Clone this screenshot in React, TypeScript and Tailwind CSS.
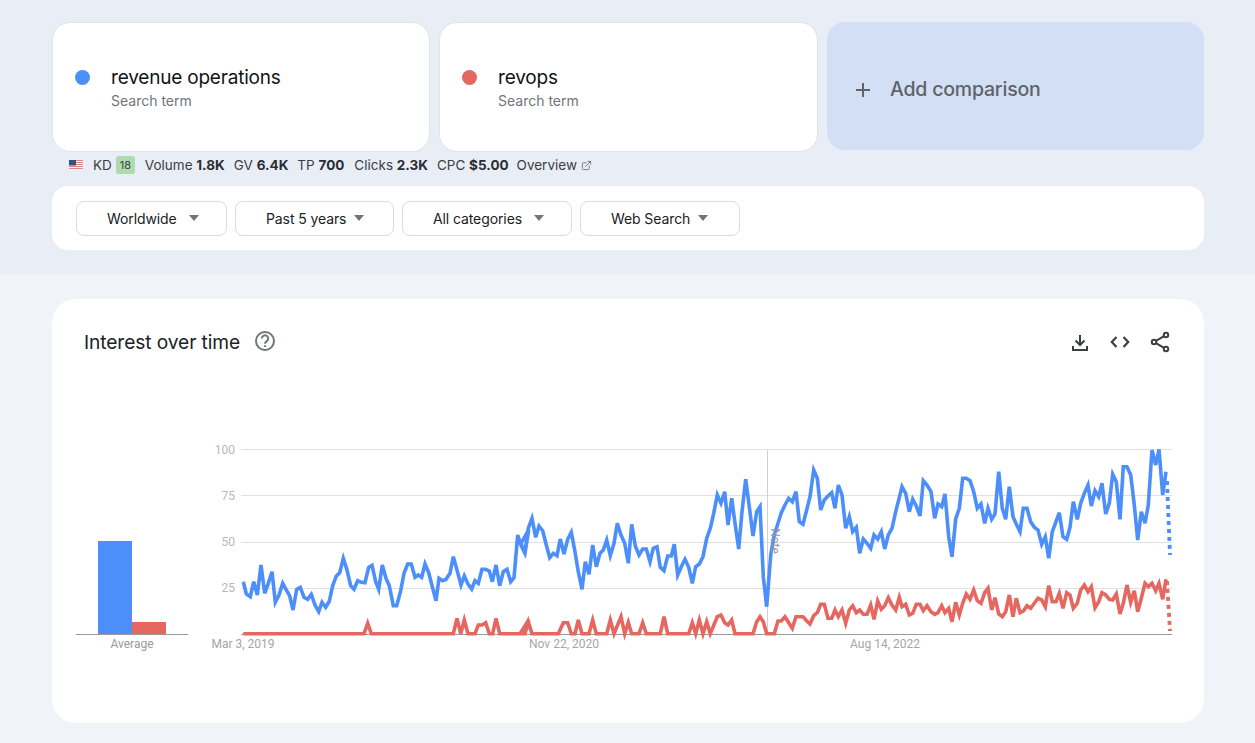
import React from "react";
import { MdAdd } from "react-icons/md";
import { FiExternalLink } from "react-icons/fi";

type P = [number, number];
const seg = (off: number, pts: number[]): P[] => {
  const out: P[] = [];
  for (let i = 0; i < pts.length; i += 2) out.push([off + pts[i] / 3, 440 + pts[i + 1] / 3]);
  return out;
};
const str = (p: P[]) => p.map(([x, y]) => `${x.toFixed(1)},${y.toFixed(1)}`).join(" ");

const blue = str([
  ...seg(200, [130,425,139,462,151,470,161,425,172,465,183,375,194,460,205,430,216,395,226,487,237,465,248,430,258,448,269,468,279,510,290,448,301,442,312,472,323,478,334,463,345,495,356,515,366,487,377,502,388,484,398,437,409,408,419,398,430,355,441,390,452,437,462,448,473,422,484,427,495,428,506,382,516,376,527,425,536,448,547,375,558,415,568,437,580,497,590,497,602,452,612,400,623,372,634,372,645,412,655,405,665,412,675,372,686,398,697,440,708,482,717,415,728,422,738,418,750,400,760,350,771,390,783,435,793,408,804,432,815,447,825,422,835,430,846,388,857,388,868,393,877,425,888,375,899,437,910,395,921,388,932,425,942,413,953,285,964,318,975,340,986,270]),
  ...seg(520, [3,310,14,340,25,265,36,235,47,292,57,258,68,272,79,315,89,353,100,340,111,347,121,297,132,342,143,298,154,277,165,335,175,395,186,448,196,365,207,403,218,315,229,380,240,340,250,330,260,300,271,347,282,310,292,250,303,285,314,310,325,370,335,253,346,318,357,345,368,327,379,327,390,365,400,325,411,320,421,382,432,392,443,348,454,348,463,313,473,405,484,380,495,358,506,382,517,430,527,380,538,372,549,350,560,295,571,265,581,220,592,165,603,190,614,155,624,255,635,175,645,250,656,327,666,215,677,118,688,200,699,288,710,215,720,200,730,410,740,500,752,345,763,285,774,250,784,218,795,195,806,175,817,185,828,155,838,245,849,253,860,210,870,170,881,90,892,115,902,210,913,180,924,168,935,158,945,205,955,135,966,165,977,265,988,230]),
  ...seg(850, [8,275,19,262,29,340,40,297,51,310,62,325,72,285,83,297,94,275,104,327,115,285,126,265,137,215,146,180,156,140,167,160,178,215,188,178,199,198,210,228,220,122,231,135,243,155,254,235,264,192,275,200,285,162,296,290,306,350,317,237,328,205,338,115,349,115,360,122,371,155,382,205,393,192,404,250,414,205,425,238,435,222,446,95,457,205,467,238,478,140,489,230,499,252,510,275,520,205,531,205,542,245,553,262,564,270,575,313,586,290,596,355,607,275,618,245,628,218,639,290,650,298,660,262,670,185,682,238,692,190,703,160,714,135,724,198,735,152,746,170,756,130,767,222,778,190,788,103,799,125,810,238,820,80,831,80,842,105,853,195,863,300,874,215,885,250,895,195,906,30,917,75,927,28,938,165,948,95]),
]);

const red = str([
  ...seg(200, [130,581,492,581,503,550,514,581,760,581,771,535,782,581,793,540,804,581,825,581,835,555,846,555,857,548,868,581,878,581,888,535,899,581,975,581,986,540]),
  ...seg(520, [0,581,14,581,25,545,36,581,115,581,130,548,143,548,154,581,165,581,175,540,186,581,207,581,218,540,229,581,260,581,271,540,282,581,303,530,314,581,325,547,335,581,357,581,368,548,379,581,421,581,432,530,443,581,506,581,517,548,527,581,538,540,549,581,560,545,571,581,592,530,603,525,614,548,624,555,635,540,645,581,699,581,710,545,720,530,730,545,740,581,763,581,774,543,784,543,795,530,806,548,817,565,828,530,849,530,860,543,870,552,881,527,892,518,902,493,913,493,924,535,935,535,945,510,955,530,966,510,977,550,988,510]),
  ...seg(850, [8,497,19,518,29,510,40,523,51,523,62,495,72,538,83,483,94,508,104,497,115,473,126,495,137,510,148,472,156,500,167,493,178,525,188,520,199,493,210,493,220,512,231,497,243,515,254,523,264,518,275,497,285,518,296,505,306,545,317,487,328,525,338,490,349,462,360,478,371,450,382,482,393,490,404,458,414,445,425,510,435,473,446,522,457,530,467,515,478,465,489,530,499,475,510,518,520,513,531,497,542,505,553,490,564,475,575,480,586,500,596,437,607,485,618,485,628,460,639,505,650,458,660,465,670,505,682,490,692,450,703,435,714,455,724,440,735,503,746,485,756,458,767,465,778,478,788,480,799,462,810,522,820,490,831,435,842,487,853,452,863,515,874,475,885,430,895,440,906,430,917,452,927,430,938,478,948,418]),
]);

const BLUE = "#4d8ffa";
const RED = "#e56760";

function Caret() {
  return <span className="h-0 w-0 border-x-[5.5px] border-t-[6px] border-x-transparent border-t-[#70757a]" />;
}

function TermCard({ color, name, w }: { color: string; name: string; w: string }) {
  return (
    <div className={`flex h-[130px] items-start rounded-[18px] border border-[#dfe3ea] bg-white pl-[22px] ${w}`}>
      <span className="mr-[21px] mt-[47px] h-[15px] w-[15px] rounded-full" style={{ backgroundColor: color }} />
      <div className="pt-[42px]">
        <div className="text-[19px] font-[420] leading-[26px] tracking-[-0.2px] text-[#111315]">{name}</div>
        <div className="text-[14px] leading-[20px] text-[#70757a]">Search term</div>
      </div>
    </div>
  );
}

function Filter({ label, w, gap }: { label: string; w: string; gap: string }) {
  return (
    <div className={`flex h-[35px] items-center rounded-[8px] border border-[#dadce0] bg-white pl-[30px] text-[14px] tracking-[-0.1px] text-[#202124] ${w} ${gap}`}>
      <span>{label}</span>
      <Caret />
    </div>
  );
}

function Metric({ k, v, className }: { k: string; v: string; className: string }) {
  return (
    <span className={className}>
      {k} <b className="font-bold text-[#2b2e33]">{v}</b>
    </span>
  );
}

function Flag() {
  return (
    <svg width="14" height="10" viewBox="0 0 14 10" className="mr-[10px]">
      <rect width="14" height="10" fill="#f3f3f6" />
      {[0, 2, 4, 6, 8].map((y) => (
        <rect key={y} y={y} width="14" height="1" fill="#d9868b" />
      ))}
      <rect width="7" height="5.5" fill="#3f4d85" />
    </svg>
  );
}

function HelpIcon() {
  return (
    <svg width="24" height="24" viewBox="0 0 24 24" fill="none" stroke="#70757a" strokeWidth="2" className="mb-[2px]">
      <circle cx="12" cy="12" r="9" />
      <path d="M8.8 9.6a3.2 3.2 0 1 1 5 2.6c-1 .7-1.8 1.3-1.8 2.6" />
      <path d="M12 16.2v1.9" />
    </svg>
  );
}

function DownloadIcon() {
  return (
    <svg width="24" height="24" viewBox="0 0 24 24" fill="none" stroke="#3c4043" strokeWidth="2">
      <path d="M12 5v10M7.5 10.5 12 15l4.5-4.5M5 16v4h14v-4" />
    </svg>
  );
}

function CodeIcon() {
  return (
    <svg width="24" height="24" viewBox="0 0 24 24" fill="none" stroke="#3c4043" strokeWidth="2.2">
      <path d="M8.5 7 3.8 12l4.7 5M15.5 7l4.7 5-4.7 5" />
    </svg>
  );
}

function ShareIcon() {
  return (
    <svg width="24" height="24" viewBox="0 0 24 24" fill="none" stroke="#3c4043" strokeWidth="2">
      <circle cx="18" cy="5" r="2.2" />
      <circle cx="6" cy="12" r="2.2" />
      <circle cx="18" cy="19" r="2.2" />
      <path d="M8 10.9 16 6.1M8 13.1l8 4.8" />
    </svg>
  );
}

export default function App() {
  return (
    <div className="min-h-[743px] w-[1255px] overflow-hidden bg-[#f0f4f9] font-['Inter','Noto_Sans',sans-serif]">
      <div className="h-[274px] bg-[#e8edf6] pl-[52px] pr-[51px] pt-[22px]">
        <div className="flex gap-[9px]">
          <TermCard color={BLUE} name="revenue operations" w="w-[378px]" />
          <TermCard color={RED} name="revops" w="w-[379px]" />
          <div className="flex h-[128px] w-[377px] items-center rounded-[18px] bg-[#d3dff5] pl-[24px] pt-[7px] text-[#5f6368]">
            <MdAdd className="mr-[15px] text-[24px]" />
            <span className="text-[19.5px] font-medium tracking-[-0.2px]">Add comparison</span>
          </div>
        </div>
        <div className="flex h-[28px] items-center pb-[2px] pl-[17px] text-[13.5px] text-[#3c4043]">
          <Flag />
          <span>KD</span>
          <span className="ml-[4px] mr-[10px] flex h-[18px] w-[19px] items-center justify-center rounded-[3px] bg-[#aedcae] text-[11px] text-[#3c4043]">18</span>
          <Metric k="Volume" v="1.8K" className="mr-[9px]" />
          <Metric k="GV" v="6.4K" className="mr-[9px]" />
          <Metric k="TP" v="700" className="mr-[10px]" />
          <Metric k="Clicks" v="2.3K" className="mr-[9px]" />
          <Metric k="CPC" v="$5.00" className="mr-[8px]" />
          <span>Overview</span>
          <FiExternalLink className="ml-[4px] text-[11px] text-[#70757a]" />
        </div>
        <div className="mt-[6px] flex h-[64px] items-center gap-[8px] rounded-[16px] bg-white pl-[24px]">
          <Filter label="Worldwide" w="w-[151px]" gap="gap-[12px]" />
          <Filter label="Past 5 years" w="w-[159px]" gap="gap-[8px]" />
          <Filter label="All categories" w="w-[170px]" gap="gap-[12px]" />
          <Filter label="Web Search" w="w-[160px]" gap="gap-[8px]" />
        </div>
      </div>

      <div className="ml-[52px] mr-[51px] mt-[25px] h-[424px] rounded-[24px] bg-white">
        <div className="flex h-[86px] items-center justify-between pl-[32px] pr-[32px]">
          <div className="flex items-center gap-[13px]">
            <span className="text-[19.2px] tracking-[-0.1px] text-[#202124]">Interest over time</span>
            <HelpIcon />
          </div>
          <div className="flex items-center gap-[16px]">
            <DownloadIcon />
            <CodeIcon />
            <ShareIcon />
          </div>
        </div>
        <div className="mt-[55px] flex items-start">
          <div className="ml-[24px] mr-[12px] w-[112px] pt-[101px]">
            <div className="flex h-[94px] items-end border-b border-[#999999] pl-[22px]">
              <div className="h-[93px] w-[34px] bg-[#4d8ffa]" />
              <div className="h-[12px] w-[34px] bg-[#e56760]" />
            </div>
            <div className="pt-[2px] text-center font-['Roboto',sans-serif] text-[12px] leading-[14px] text-[#999999]">Average</div>
          </div>
          <svg width="980" height="220" viewBox="200 440 980 220" className="block">
            {[449.5, 495.5, 542.5, 588.5].map((y) => (
              <line key={y} x1="241" x2="1172" y1={y} y2={y} stroke="#e0e0e0" />
            ))}
            <line x1="241" x2="1172" y1="634.5" y2="634.5" stroke="#999999" />
            <line x1="767.5" x2="767.5" y1="450" y2="634" stroke="#d0d0d0" />
            {[["100", 454], ["75", 500], ["50", 546], ["25", 592]].map(([t, y]) => (
              <text key={t} x="235" y={y} textAnchor="end" fontFamily="Roboto" fontSize="12" fill="#b7b7b7">{t}</text>
            ))}
            {[["Mar 3, 2019", 243], ["Nov 22, 2020", 564], ["Aug 14, 2022", 885]].map(([t, x]) => (
              <text key={t} x={x} y="648" textAnchor="middle" fontFamily="Roboto" fontSize="12" fill="#a6a6a6">{t}</text>
            ))}
            <polyline points={red} fill="none" stroke={RED} strokeWidth="3.6" />
            <polyline points={blue} fill="none" stroke={BLUE} strokeWidth="3.6" />
            <polyline points="1167,481 1170,555" fill="none" stroke={BLUE} strokeWidth="3.8" strokeDasharray="4 4" />
            <polyline points="1167,581 1170,631" fill="none" stroke={RED} strokeWidth="3.8" strokeDasharray="4 4" />
            <text x="0" y="0" transform="translate(771 541) rotate(90)" textAnchor="middle" fontFamily="Roboto" fontSize="12" fill="#9a9a9a">Note</text>
          </svg>
        </div>
      </div>
    </div>
  );
}
